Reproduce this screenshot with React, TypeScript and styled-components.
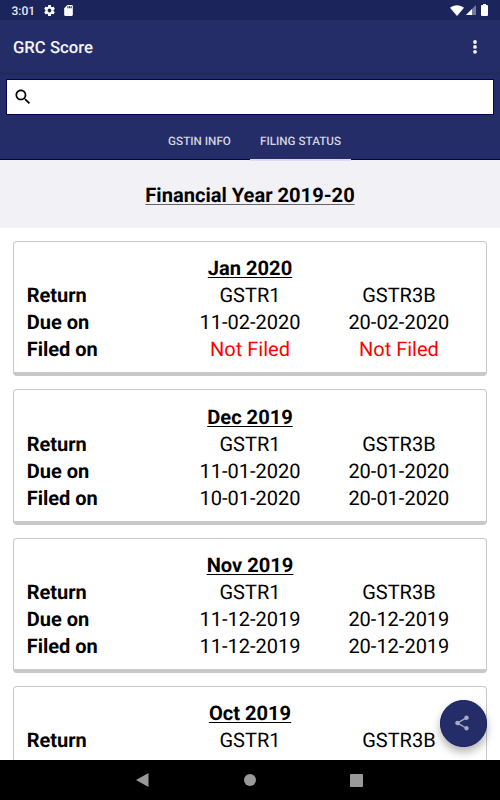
import React from "react";
import styled, { createGlobalStyle } from "styled-components";

const Global = createGlobalStyle`
  * { box-sizing: border-box; }
  body {
    margin: 0;
    background: #fff;
    font-family: Roboto, "Liberation Sans", sans-serif;
    text-rendering: geometricPrecision;
  }
`;

const Screen = styled.div`
  position: relative;
  width: 500px;
  height: 800px;
  overflow: hidden;
  display: flex;
  flex-direction: column;
  background: #fff;
  color: #000;
`;

const StatusBar = styled.div`
  flex: none;
  height: 20px;
  padding: 0 12px 0 11.5px;
  display: flex;
  align-items: center;
  justify-content: space-between;
  background: #1b245b;
  color: #fff;
  font-size: 12px;
  font-weight: 500;
`;

const StatusGroup = styled.div<{ $gap: number }>`
  display: flex;
  align-items: center;
  gap: ${(p) => p.$gap}px;
  svg { display: block; }
`;

const Clock = styled.span`
  width: 24px;
  margin-right: 2px;
  line-height: 20px;
  padding-top: 1px;
  white-space: nowrap;
  color: #e9eaf0;
`;

const AppBar = styled.header`
  flex: none;
  height: 53px;
  padding: 0 20px 0 13px;
  display: flex;
  align-items: center;
  justify-content: space-between;
  background: #252d69;
  color: #f4f4f8;
  border-bottom: 1px solid #232a60;
`;

const Title = styled.h1`
  margin: 0;
  padding-top: 5px;
  font-size: 16.7px;
  line-height: 22px;
  font-weight: 500;
`;

const Header = styled.div`
  flex: none;
  height: 87px;
  padding: 6px 6px 0;
  background: linear-gradient(#212858, #252d69 3px);
  border-bottom: 1px solid #02034e;
`;

const Search = styled.div`
  height: 36px;
  padding-left: 6px;
  display: flex;
  align-items: center;
  background: #fff;
  border: 1px solid #02034e;
  border-left-width: 0.5px;
`;

const Tabs = styled.nav`
  height: 45px;
  display: flex;
  justify-content: center;
`;

const Tab = styled.div<{ $active?: boolean }>`
  position: relative;
  width: 101px;
  height: 45px;
  line-height: 52px;
  text-align: center;
  font-size: 11.7px;
  font-weight: 500;
  color: #d3d4e0;
  &::after {
    content: "";
    position: absolute;
    left: 0;
    right: 0;
    bottom: -1px;
    height: 2px;
    background: ${(p) => (p.$active ? "#dcdbe9" : "transparent")};
  }
`;

const YearBand = styled.div`
  flex: none;
  height: 68px;
  display: flex;
  align-items: center;
  justify-content: center;
  background: #f2f1f6;
`;

const Year = styled.h2`
  margin: 0;
  padding-top: 2px;
  font-size: 20.1px;
  line-height: 23px;
  font-weight: 700;
  text-decoration: underline 1px #666;
  text-underline-offset: 2px;
  text-decoration-skip-ink: none;
`;

const List = styled.main`
  flex: 1;
  min-height: 0;
  overflow: hidden;
  padding: 13px 13px 0;
  display: flex;
  flex-direction: column;
  gap: 13px;
`;

const Card = styled.section`
  flex: none;
  height: 135.33px;
  padding: 13.4px 12.7px 0 12.7px;
  border: 1px solid #c8c8c8;
  border-bottom-width: 4px;
  border-radius: 4px;
  font-size: 20px;
  line-height: 27px;
`;

const Month = styled.h3`
  margin: 0 auto;
  width: fit-content;
  height: 27px;
  font-size: 20.1px;
  line-height: 27px;
  font-weight: 700;
  text-decoration: underline;
  text-decoration-thickness: 1px;
  text-underline-offset: 2px;
  text-decoration-skip-ink: none;
`;

const Row = styled.div`
  display: grid;
  grid-template-columns: repeat(3, 1fr);
  height: 27px;
  text-align: center;
`;

const Label = styled.span`
  font-weight: 700;
  text-align: left;
`;

const Value = styled.span<{ $missing?: boolean }>`
  color: ${(p) => (p.$missing ? "#f00" : "#000")};
`;

const Fab = styled.button`
  position: absolute;
  left: 440px;
  top: 700px;
  width: 46.5px;
  height: 46.5px;
  padding: 0 2px 0 0;
  border: 1px solid #12185f;
  border-radius: 50%;
  display: flex;
  align-items: center;
  justify-content: center;
  background: #252d69;
  box-shadow: 0 5px 8px rgba(0, 0, 0, 0.3);
`;

const NavBar = styled.footer`
  position: relative;
  flex: none;
  height: 40px;
  padding: 0 137px 0 136px;
  display: flex;
  align-items: center;
  justify-content: space-between;
  background: #000;
`;

const months = [
  { name: "Jan 2020", due: ["11-02-2020", "20-02-2020"], filed: ["Not Filed", "Not Filed"] },
  { name: "Dec 2019", due: ["11-01-2020", "20-01-2020"], filed: ["10-01-2020", "20-01-2020"] },
  { name: "Nov 2019", due: ["11-12-2019", "20-12-2019"], filed: ["11-12-2019", "20-12-2019"] },
  { name: "Oct 2019" },
];

const GearIcon = () => (
  <svg width="13" height="13" viewBox="0 0 24 24" fill="#fff">
    <path d="M19.43 12.98c.04-.32.07-.64.07-.98s-.03-.66-.07-.98l2.11-1.65c.19-.15.24-.42.12-.64l-2-3.46c-.12-.22-.39-.3-.61-.22l-2.49 1c-.52-.4-1.08-.73-1.69-.98l-.38-2.65C14.46 2.18 14.25 2 14 2h-4c-.25 0-.46.18-.49.42l-.38 2.65c-.61.25-1.17.59-1.69.98l-2.49-1c-.23-.09-.49 0-.61.22l-2 3.46c-.13.22-.07.49.12.64l2.11 1.65c-.04.32-.07.65-.07.98s.03.66.07.98l-2.11 1.65c-.19.15-.24.42-.12.64l2 3.46c.12.22.39.3.61.22l2.49-1c.52.4 1.08.73 1.69.98l.38 2.65c.03.24.24.42.49.42h4c.25 0 .46-.18.49-.42l.38-2.65c.61-.25 1.17-.59 1.69-.98l2.49 1c.23.09.49 0 .61-.22l2-3.46c.12-.22.07-.49-.12-.64l-2.11-1.65zM12 15.5c-1.93 0-3.5-1.57-3.5-3.5s1.57-3.5 3.5-3.5 3.5 1.57 3.5 3.5-1.57 3.5-3.5 3.5z" />
  </svg>
);

const SdIcon = () => (
  <svg width="13" height="13" viewBox="0 0 24 24" fill="#fff">
    <path d="M18 2h-8L4.02 8 4 20c0 1.100.9 2 2 2h12c1.100 0 2-.9 2-2V4c0-1.100-.9-2-2-2zm-6 6h-2V4h2v4zm3 0h-2V4h2v4zm3 0h-2V4h2v4z" />
  </svg>
);

const WifiIcon = () => (
  <svg width="14" height="11" viewBox="0 0 14 11" fill="#fff">
    <path d="M0 2.800C4-.6 10-.6 14 2.800L7 11z" />
  </svg>
);

const SignalIcon = () => (
  <svg width="10" height="10" viewBox="0 0 10 10">
    <path d="M10 0v10H0z" fill="#747aa0" />
    <path d="M6 4v6H0z" fill="#fff" />
  </svg>
);

const BatteryIcon = () => (
  <svg width="7" height="12" viewBox="0 0 7 12" fill="#fff">
    <path d="M2 0h3v1h1a1 1 0 0 1 1 1v9a1 1 0 0 1-1 1H1a1 1 0 0 1-1-1V2a1 1 0 0 1 1-1h1z" />
  </svg>
);

const MoreIcon = () => (
  <svg width="10" height="16" viewBox="0 0 10 16" fill="#f4f4f8">
    <circle cx="5" cy="4" r="1.900" />
    <circle cx="5" cy="8.900" r="1.900" />
    <circle cx="5" cy="13.800" r="1.900" />
  </svg>
);

const SearchIcon = () => (
  <svg width="20" height="20" viewBox="0 0 24 24" fill="#000">
    <path d="M15.500 14h-.79l-.28-.27C15.410 12.590 16 11.110 16 9.500 16 5.910 13.090 3 9.500 3S3 5.910 3 9.500 5.910 16 9.500 16c1.610 0 3.090-.59 4.230-1.570l.27.28v.79l5 4.990L20.490 19l-4.990-5zm-6 0C7.010 14 5 11.990 5 9.500S7.010 5 9.500 5 14 7.010 14 9.500 11.990 14 9.500 14z" />
  </svg>
);

const ShareIcon = () => (
  <svg width="18" height="18" viewBox="0 0 24 24" fill="#a9abc6">
    <path d="M18 16.080c-.76 0-1.440.3-1.960.77L8.910 12.700c.05-.23.09-.46.09-.7s-.04-.47-.09-.7l7.050-4.110c.54.5 1.250.81 2.040.81 1.660 0 3-1.340 3-3s-1.340-3-3-3-3 1.340-3 3c0 .24.04.47.09.7L8.040 9.810C7.500 9.310 6.790 9 6 9c-1.660 0-3 1.340-3 3s1.340 3 3 3c.79 0 1.500-.31 2.040-.81l7.120 4.160c-.05.21-.08.43-.08.65 0 1.610 1.310 2.920 2.920 2.920s2.920-1.310 2.920-2.920-1.310-2.920-2.920-2.920z" />
  </svg>
);

export default function App() {
  return (
    <>
      <Global />
      <Screen>
        <StatusBar>
          <StatusGroup $gap={5.5}>
            <Clock>3:01</Clock>
            <GearIcon />
            <SdIcon />
          </StatusGroup>
          <StatusGroup $gap={1.8}>
            <WifiIcon />
            <SignalIcon />
            <span />
            <span />
            <BatteryIcon />
          </StatusGroup>
        </StatusBar>
        <AppBar>
          <Title>GRC Score</Title>
          <MoreIcon />
        </AppBar>
        <Header>
          <Search>
            <SearchIcon />
          </Search>
          <Tabs>
            <Tab>GSTIN INFO</Tab>
            <Tab $active>FILING STATUS</Tab>
          </Tabs>
        </Header>
        <YearBand>
          <Year>Financial Year 2019-20</Year>
        </YearBand>
        <List>
          {months.map((m) => (
            <Card key={m.name}>
              <Month>{m.name}</Month>
              <Row>
                <Label>Return</Label>
                <Value>GSTR1</Value>
                <Value>GSTR3B</Value>
              </Row>
              {m.due && (
                <Row>
                  <Label>Due on</Label>
                  {m.due.map((d) => (
                    <Value key={d}>{d}</Value>
                  ))}
                </Row>
              )}
              {m.filed && (
                <Row>
                  <Label>Filed on</Label>
                  {m.filed.map((f, i) => (
                    <Value key={i} $missing={f === "Not Filed"}>
                      {f}
                    </Value>
                  ))}
                </Row>
              )}
            </Card>
          ))}
        </List>
        <Fab aria-label="Share">
          <ShareIcon />
        </Fab>
        <NavBar>
          <svg width="13" height="14" viewBox="0 0 13 14" fill="#999">
            <path d="M12.500 0v14L0 7z" />
          </svg>
          <svg width="12" height="12" viewBox="0 0 12 12" fill="#999">
            <circle cx="6" cy="6" r="6" />
          </svg>
          <svg width="13" height="13" viewBox="0 0 13 13" fill="#999">
            <rect width="13" height="13" rx="1" />
          </svg>
        </NavBar>
      </Screen>
    </>
  );
}
